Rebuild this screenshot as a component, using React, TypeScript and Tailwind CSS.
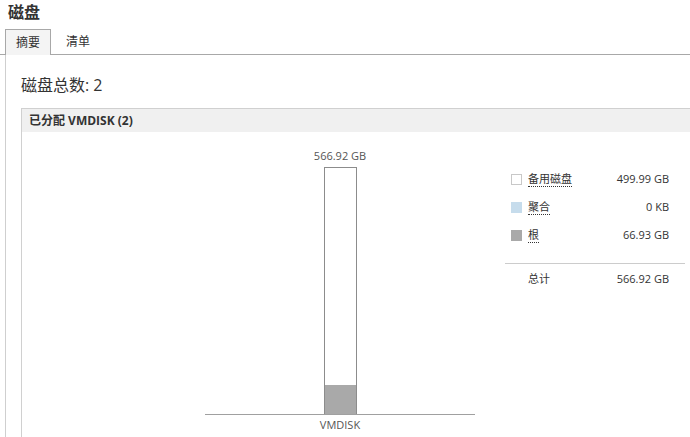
import React from 'react';

const FONT = '"Open Sans", "Noto Sans CJK SC", sans-serif';

type LegendItem = {
  label: string;
  value: string;
  swatch: string;
};

const legend: LegendItem[] = [
  { label: '备用磁盘', value: '499.99 GB', swatch: 'bg-white border border-[#c8c8c8]' },
  { label: '聚合', value: '0 KB', swatch: 'bg-[#c6dcec]' },
  { label: '根', value: '66.93 GB', swatch: 'bg-[#a9a9a9]' },
];

function Chart() {
  return (
    <div className="ml-[183px] flex w-[270px] flex-col items-center pt-[16px]">
      <div className="h-[16px] text-[11px] leading-[16px] text-[#555]">566.92 GB</div>
      <div className="mt-[3px] flex h-[247px] w-[33px] flex-col justify-end border border-b-0 border-[#8c8c8c] bg-white">
        <div className="h-[29px] bg-[#a9a9a9]" />
      </div>
      <div className="h-px w-[270px] bg-[#a0a0a0]" />
      <div className="mt-[2px] text-[11px] leading-[16px] text-[#555]">VMDISK</div>
    </div>
  );
}

function Legend() {
  return (
    <div className="ml-[30px] w-[180px] pt-[33px] text-[11px] text-[#333]">
      {legend.map((item) => (
        <div key={item.label} className="flex h-[28px] items-center pl-[6px] pr-[16px]">
          <div className={`h-[11px] w-[11px] shrink-0 ${item.swatch}`} />
          <span className="ml-[6px] border-b border-dotted border-[#333] leading-[14px]">{item.label}</span>
          <span className="ml-auto">{item.value}</span>
        </div>
      ))}
      <div className="mt-[14px] h-px bg-[#ccc]" />
      <div className="flex h-[30px] items-center pl-[23px] pr-[16px]">
        <span>总计</span>
        <span className="ml-auto">566.92 GB</span>
      </div>
    </div>
  );
}

export default function App() {
  return (
    <div className="h-[437px] w-[690px] overflow-hidden bg-white text-[#333]" style={{ fontFamily: FONT }}>
      <div className="h-[29px] pl-[8px] pt-[1px] text-[16px] font-bold leading-[22px]">磁盘</div>

      {/* tabs */}
      <div className="flex h-[26px]">
        <div className="w-[5px] border-b border-[#a8a8a8]" />
        <div className="flex w-[46px] items-center justify-center border border-b-0 border-[#a8a8a8] bg-[#f4f4f4] text-[12px]">
          摘要
        </div>
        <div className="flex flex-1 items-center border-b border-[#a8a8a8] pl-[15px] text-[12px]">清单</div>
      </div>

      <div className="ml-[5px] h-[400px] border-l border-[#cfcfcf] pl-[15px]">
        <div className="pt-[19px] text-[16px] leading-[22px] text-[#333]">磁盘总数: 2</div>

        <div className="mt-[12px] w-[700px] border border-[#d0d0d0]">
          <div className="flex h-[23px] items-center bg-[#f0f0f0] pl-[7px] text-[12px] font-bold">
            已分配 VMDISK (2)
          </div>
          <div className="flex h-[320px] items-start">
            <Chart />
            <Legend />
          </div>
        </div>
      </div>
    </div>
  );
}
